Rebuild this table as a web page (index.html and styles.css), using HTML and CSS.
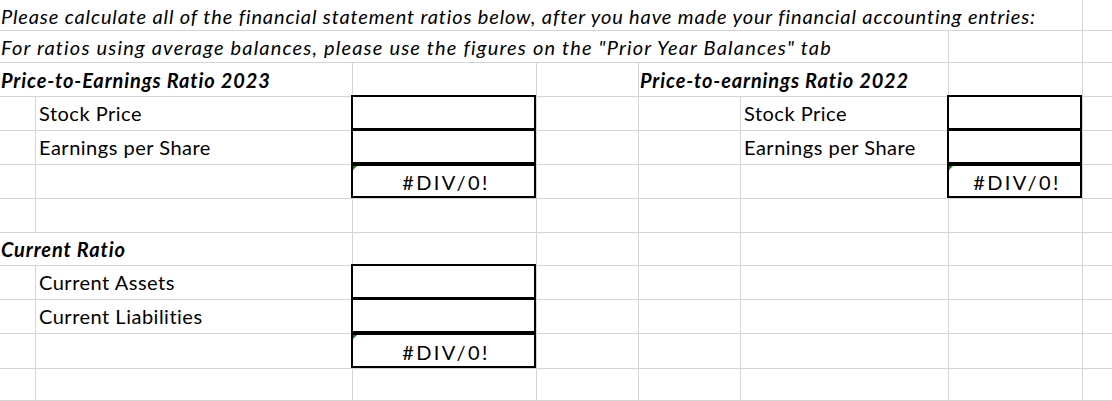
FILE: index.html
```html
<!DOCTYPE html>
<html lang="en">
<head>
<meta charset="utf-8">
<title>Financial statement ratios</title>
<link rel="stylesheet" href="styles.css">
</head>
<body>
<div class="sheet">
  <!-- Row 1 -->
  <div class="c r1 span-a-g note note-1">Please calculate all of the financial statement ratios below, after you have made your financial accounting entries:</div>
  <div class="c r1"></div>
  <!-- Row 2 -->
  <div class="c r2 span-a-f note note-2">For ratios using average balances, please use the figures on the "Prior Year Balances" tab</div>
  <div class="c r2"></div>
  <div class="c r2"></div>
  <!-- Row 3 -->
  <div class="c span2 head">Price-to-Earnings Ratio 2023</div>
  <div class="c"></div>
  <div class="c"></div>
  <div class="c span2 head">Price-to-earnings Ratio 2022</div>
  <div class="c"></div>
  <div class="c"></div>
  <!-- Row 4 -->
  <div class="c"></div>
  <div class="c label">Stock Price</div>
  <div class="c box"></div>
  <div class="c"></div>
  <div class="c"></div>
  <div class="c label">Stock Price</div>
  <div class="c box"></div>
  <div class="c"></div>
  <!-- Row 5 -->
  <div class="c"></div>
  <div class="c label">Earnings per Share</div>
  <div class="c box"></div>
  <div class="c"></div>
  <div class="c"></div>
  <div class="c label">Earnings per Share</div>
  <div class="c box"></div>
  <div class="c"></div>
  <!-- Row 6 -->
  <div class="c"></div>
  <div class="c"></div>
  <div class="c box result">#DIV/0!</div>
  <div class="c"></div>
  <div class="c"></div>
  <div class="c"></div>
  <div class="c box result">#DIV/0!</div>
  <div class="c"></div>
  <!-- Row 7 -->
  <div class="c"></div><div class="c"></div><div class="c"></div><div class="c"></div>
  <div class="c"></div><div class="c"></div><div class="c"></div><div class="c"></div>
  <!-- Row 8 -->
  <div class="c span2 head">Current Ratio</div>
  <div class="c"></div><div class="c"></div><div class="c"></div>
  <div class="c"></div><div class="c"></div><div class="c"></div>
  <!-- Row 9 -->
  <div class="c"></div>
  <div class="c label">Current Assets</div>
  <div class="c box"></div>
  <div class="c"></div><div class="c"></div><div class="c"></div><div class="c"></div><div class="c"></div>
  <!-- Row 10 -->
  <div class="c"></div>
  <div class="c label">Current Liabilities</div>
  <div class="c box"></div>
  <div class="c"></div><div class="c"></div><div class="c"></div><div class="c"></div><div class="c"></div>
  <!-- Row 11 -->
  <div class="c"></div>
  <div class="c"></div>
  <div class="c box result">#DIV/0!</div>
  <div class="c"></div><div class="c"></div><div class="c"></div><div class="c"></div><div class="c"></div>
  <!-- Row 12 -->
  <div class="c"></div><div class="c"></div><div class="c"></div><div class="c"></div>
  <div class="c"></div><div class="c"></div><div class="c"></div><div class="c"></div>
</div>
</body>
</html>
```
FILE: styles.css
```css
html, body {
  margin: 0;
  padding: 0;
  background: #fff;
  overflow: hidden;
}

.sheet {
  display: grid;
  grid-template-columns: 36px 317px 184px 102px 102px 208px 134px 40px;
  grid-template-rows: 31px 32px 34px 34px 34px 34px 34px 33px 34px 34px 35px 32px;
  font-family: "Lato", "Carlito", "Liberation Sans", sans-serif;
  font-size: 20px;
  font-variant-ligatures: none;
  font-feature-settings: "liga" 0, "clig" 0;
  color: #000;
}

.c {
  box-sizing: border-box;
  border-right: 1px solid #d4d4d4;
  border-bottom: 1px solid #d4d4d4;
  display: flex;
  align-items: flex-end;
  line-height: 20px;
  padding: 0 0 7px 3px;
  white-space: nowrap;
  position: relative;
  min-width: 0;
}

.label {
  letter-spacing: 0.5px;
}

.r1 {
  padding-bottom: 4px;
}

.r2 {
  padding-bottom: 5px;
}

.span-a-g {
  grid-column: span 7;
  padding-left: 1px;
}

.span-a-f {
  grid-column: span 6;
  padding-left: 1px;
}

.span2 {
  grid-column: span 2;
}

.note {
  font-style: italic;
}

.note-1 {
  letter-spacing: 0.86px;
}

.note-2 {
  letter-spacing: 1.18px;
}

.head {
  font-style: italic;
  font-weight: 700;
  letter-spacing: 0.85px;
  padding-left: 1px;
  padding-bottom: 6.5px;
}

.box::after {
  content: "";
  position: absolute;
  left: -2px;
  top: -2px;
  right: 0;
  bottom: 0;
  border: 2px solid #000;
  pointer-events: none;
}

.result {
  justify-content: center;
  padding-left: 3px;
  padding-bottom: 6px;
  letter-spacing: 2.4px;
}

.result::after {
  border-top-width: 3px;
}

.result::before {
  content: "";
  position: absolute;
  left: 0;
  top: 1px;
  width: 0;
  height: 0;
  border-top: 4px solid #1f7a1f;
  border-right: 4px solid transparent;
}
```
